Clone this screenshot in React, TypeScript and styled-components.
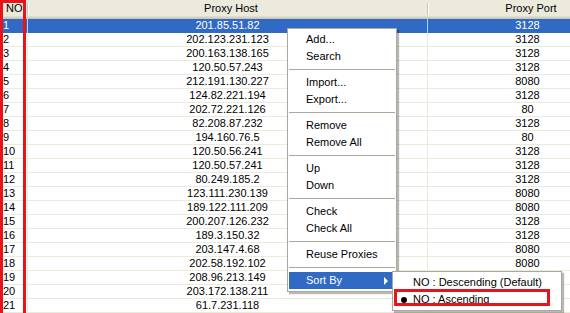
import React from "react";
import styled, { createGlobalStyle } from "styled-components";

const GlobalStyle = createGlobalStyle`
  html, body {
    margin: 0;
    padding: 0;
    background: #ffffff;
    overflow: hidden;
  }
  body {
    font-family: "Liberation Sans", Arial, sans-serif;
    font-size: 11px;
    color: #000000;
  }
`;

const proxies: [string, string][] = [
  ["201.85.51.82", "3128"],
  ["202.123.231.123", "3128"],
  ["200.163.138.165", "3128"],
  ["120.50.57.243", "3128"],
  ["212.191.130.227", "8080"],
  ["124.82.221.194", "3128"],
  ["202.72.221.126", "80"],
  ["82.208.87.232", "3128"],
  ["194.160.76.5", "80"],
  ["120.50.56.241", "3128"],
  ["120.50.57.241", "3128"],
  ["80.249.185.2", "3128"],
  ["123.111.230.139", "8080"],
  ["189.122.111.209", "8080"],
  ["200.207.126.232", "3128"],
  ["189.3.150.32", "3128"],
  ["203.147.4.68", "8080"],
  ["202.58.192.102", "8080"],
  ["208.96.213.149", "8080"],
  ["203.172.138.211", "8080"],
  ["61.7.231.118", "8080"],
];

type MenuEntry = { label: string; sub?: boolean } | "sep";

const menuItems: MenuEntry[] = [
  { label: "Add..." },
  { label: "Search" },
  "sep",
  { label: "Import..." },
  { label: "Export..." },
  "sep",
  { label: "Remove" },
  { label: "Remove All" },
  "sep",
  { label: "Up" },
  { label: "Down" },
  "sep",
  { label: "Check" },
  { label: "Check All" },
  "sep",
  { label: "Reuse Proxies" },
  "sep",
  { label: "Sort By", sub: true },
];

const Screen = styled.div`
  position: relative;
  width: 570px;
  height: 313px;
  overflow: hidden;
`;

const Table = styled.div`
  width: 628px;
  display: flex;
  flex-direction: column;
`;

const Grid = styled.div`
  display: grid;
  grid-template-columns: 28px 400px 200px;
`;

const HeaderRow = styled(Grid)`
  height: 19px;
  background: #ebeadb;
  box-shadow: inset 0 -1px 0 #cbc7b8, inset 0 -2px 0 #d6d2c2, inset 0 -3px 0 #e2decd;
`;

const HeadCell = styled.div<{ $align?: string }>`
  position: relative;
  display: flex;
  align-items: center;
  justify-content: ${(p) => p.$align || "center"};
  padding: 0 0 2px 6px;
  height: 17px;
  line-height: 17px;

  &::after {
    content: "";
    position: absolute;
    right: 0;
    top: 3px;
    height: 12px;
    width: 1px;
    background: #c7c5b2;
    box-shadow: 1px 0 0 #ffffff;
  }
`;

const Row = styled(Grid)<{ $sel?: boolean }>`
  height: 14px;
  background: ${(p) => (p.$sel ? "#316ac5" : "#ffffff")};
  color: ${(p) => (p.$sel ? "#ffffff" : "#000000")};
  box-shadow: inset 0 -1px 0 ${(p) => (p.$sel ? "#316ac5" : "#ebeadb")};
`;

const Cell = styled.div<{ $align?: string; $sel?: boolean }>`
  height: 14px;
  line-height: 13px;
  white-space: nowrap;
  overflow: hidden;
  text-align: ${(p) => p.$align || "center"};
  padding-left: ${(p) => (p.$align === "left" ? "3px" : "0")};
  border-right: 1px solid ${(p) => (p.$sel ? "#a7d7f7" : "#ebeadb")};
`;

const RedBox = styled.div<{ $l: number; $t: number; $w: number; $h: number }>`
  position: absolute;
  left: ${(p) => p.$l}px;
  top: ${(p) => p.$t}px;
  width: ${(p) => p.$w}px;
  height: ${(p) => p.$h}px;
  border: 3px solid #e8141c;
  box-sizing: border-box;
  pointer-events: none;
`;

const Menu = styled.div<{ $l: number; $t: number; $w: number }>`
  position: absolute;
  left: ${(p) => p.$l}px;
  top: ${(p) => p.$t}px;
  width: ${(p) => p.$w}px;
  box-sizing: border-box;
  background: #ffffff;
  border: 1px solid #aca899;
  padding: 2px 1px;
  box-shadow: 2px 2px 1px rgba(0, 0, 0, 0.28);
  display: flex;
  flex-direction: column;
`;

const MenuItem = styled.div<{ $active?: boolean }>`
  position: relative;
  height: 17px;
  line-height: 17px;
  padding-left: 17px;
  white-space: nowrap;
  background: ${(p) => (p.$active ? "#316ac5" : "transparent")};
  color: ${(p) => (p.$active ? "#ffffff" : "#000000")};
`;

const Separator = styled.div`
  height: 9px;
  display: flex;
  align-items: center;

  &::before {
    content: "";
    flex: 1;
    height: 1px;
    background: #aca899;
  }
`;

const SubArrow = styled.span`
  position: absolute;
  right: 7px;
  top: 5px;
  width: 0;
  height: 0;
  border-top: 4px solid transparent;
  border-bottom: 4px solid transparent;
  border-left: 4px solid #ffffff;
`;

const SubItem = styled.div`
  position: relative;
  height: 17px;
  line-height: 17px;
  padding-left: 19px;
  white-space: nowrap;
`;

const Bullet = styled.span`
  position: absolute;
  left: 7px;
  top: 6px;
  width: 6px;
  height: 6px;
  border-radius: 50%;
  background: #000000;
`;

export default function App() {
  return (
    <Screen>
      <GlobalStyle />
      <Table>
        <HeaderRow>
          <HeadCell $align="flex-start">NO</HeadCell>
          <HeadCell>Proxy Host</HeadCell>
          <HeadCell>Proxy Port</HeadCell>
        </HeaderRow>
        {proxies.map(([host, port], i) => (
          <Row key={i} $sel={i === 0}>
            <Cell $align="left" $sel={i === 0}>
              {i + 1}
            </Cell>
            <Cell $sel={i === 0}>{host}</Cell>
            <Cell $sel={i === 0}>{port}</Cell>
          </Row>
        ))}
      </Table>

      <RedBox $l={0} $t={0} $w={26} $h={316} />

      <Menu $l={287} $t={28} $w={110}>
        {menuItems.map((m, i) =>
          m === "sep" ? (
            <Separator key={i} />
          ) : (
            <MenuItem key={i} $active={m.sub}>
              {m.label}
              {m.sub && <SubArrow />}
            </MenuItem>
          )
        )}
      </Menu>

      <Menu $l={392} $t={271} $w={170}>
        <SubItem>NO : Descending (Default)</SubItem>
        <SubItem>
          <Bullet />
          NO : Ascending
        </SubItem>
      </Menu>

      <RedBox $l={394} $t={289} $w={156} $h={17} />
    </Screen>
  );
}
